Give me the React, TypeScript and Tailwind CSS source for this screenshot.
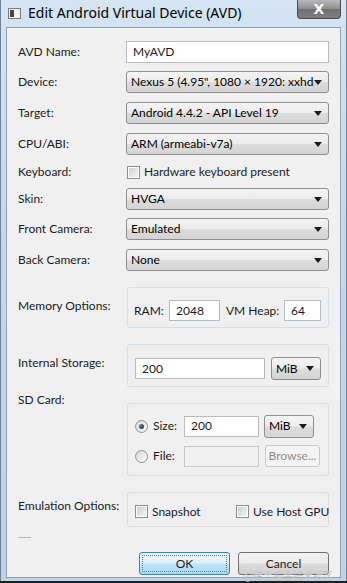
import type { ReactNode } from "react";

const FONT = { fontFamily: 'Lato, "Noto Sans", sans-serif' };

function Arrow() {
  return (
    <svg width="8" height="5" viewBox="0 0 8 5" className="shrink-0">
      <path d="M0 0 L8 0 L4 5 Z" fill="#1a1a1a" />
    </svg>
  );
}

function Select({ value, className = "" }: { value: string; className?: string }) {
  return (
    <div
      className={`flex min-w-0 items-center rounded-[3px] border border-[#8f8f8f] bg-[linear-gradient(#f4f4f4_0%,#ececec_48%,#dddddd_52%,#d4d4d4_100%)] pl-[4px] pr-[6px] ${className}`}
    >
      <span className="min-w-0 flex-1 overflow-hidden whitespace-nowrap text-black">{value}</span>
      <Arrow />
    </div>
  );
}

function Input({ value = "", className = "", disabled = false }: { value?: string; className?: string; disabled?: boolean }) {
  return (
    <div
      className={`flex items-center border pl-[6px] ${
        disabled ? "border-[#c8c8c8] bg-[#f0f0f0]" : "border-[#b6bcc4] bg-white"
      } ${className}`}
    >
      {value}
    </div>
  );
}

function Check({ label }: { label: string }) {
  return (
    <div className="flex items-center gap-[4px] whitespace-nowrap">
      <div className="flex h-[13px] w-[13px] shrink-0 items-center justify-center border border-[#8e8f8f] bg-white">
        <div className="h-[9px] w-[9px] bg-[linear-gradient(135deg,#cbcfd5,#f4f5f6)]" />
      </div>
      <span>{label}</span>
    </div>
  );
}

function Radio({ checked, label }: { checked: boolean; label: string }) {
  return (
    <div className="flex w-[49px] shrink-0 items-center gap-[5px]">
      <div className="flex h-[13px] w-[13px] items-center justify-center rounded-full border border-[#8e8f8f] bg-[linear-gradient(135deg,#d4d7db,#fbfbfb)]">
        {checked && <div className="h-[5px] w-[5px] rounded-full bg-[radial-gradient(circle_at_35%_35%,#6f7a84,#1d2329)]" />}
      </div>
      <span>{label}</span>
    </div>
  );
}

function Row({ label, children, className = "" }: { label: string; children: ReactNode; className?: string }) {
  return (
    <div className={`flex items-center ${className}`}>
      <div className="w-[108px] shrink-0 whitespace-nowrap">{label}</div>
      <div className="flex min-w-0 flex-1 flex-col">{children}</div>
    </div>
  );
}

function Group({ children, className = "" }: { children: ReactNode; className?: string }) {
  return (
    <div className={`ml-[1px] min-w-0 rounded-[3px] border border-[#d5dfe5] ${className}`}>{children}</div>
  );
}

export default function App() {
  return (
    <div
      className="relative h-[583px] w-[347px] overflow-hidden bg-[#1e1e1e] text-[12px] leading-[18px] text-[#1b1b1b]"
      style={FONT}
    >
      <div className="flex h-[581px] flex-col border-x border-[#6f8296] bg-[linear-gradient(180deg,#d5e4f2_0%,#c4d7ea_40%,#bed3e7_100%)]">
        {/* title bar */}
        <div className="flex h-[27px] shrink-0 items-start">
          <div className="ml-[7px] mt-[8px] flex h-[11px] w-[13px] items-center border border-[#7b7b7b] bg-[#f2f2f2]">
            <div className="ml-[1px] h-[7px] w-[4px] bg-[#444]" />
          </div>
          <div
            className="ml-[7px] mt-[4px] text-[14px] leading-[18px] text-black"
            style={{ fontFamily: '"Noto Sans", sans-serif' }}
          >
            Edit Android Virtual Device (AVD)
          </div>
          <div className="ml-auto mr-[5px] flex h-[19px] w-[44px] items-center justify-center rounded-b-[4px] border border-t-0 border-[#4a4a4a] bg-[linear-gradient(#b8b8b8,#8e8e8e_50%,#6f6f6f_51%,#7e7e7e)]">
            <span className="text-[14px] font-bold leading-none text-white" style={{ fontFamily: '"DejaVu Sans", sans-serif' }}>
              X
            </span>
          </div>
        </div>

        {/* client area */}
        <div className="mx-[5px] flex-1 border border-[#8da2b6] bg-[#f0f0f0] pl-[11px] pr-[11px]">
          <Row label="AVD Name:" className="mt-[13px] h-[22px]">
            <Input value="MyAVD" className="h-[22px]" />
          </Row>
          <Row label="Device:" className="mt-[8px] h-[22px]">
            <Select value={"Nexus 5 (4.95\", 1080 \u00d7 1920: xxhdpi)"} className="h-[22px]" />
          </Row>
          <Row label="Target:" className="mt-[9px] h-[22px]">
            <Select value="Android 4.4.2 - API Level 19" className="h-[22px]" />
          </Row>
          <Row label="CPU/ABI:" className="mt-[9px] h-[22px]">
            <Select value="ARM (armeabi-v7a)" className="h-[22px]" />
          </Row>
          <Row label="Keyboard:" className="mt-[6px] h-[22px]">
            <div className="pl-[1px]">
              <Check label="Hardware keyboard present" />
            </div>
          </Row>
          <Row label="Skin:" className="mt-[5px] h-[22px]">
            <Select value="HVGA" className="h-[22px]" />
          </Row>
          <Row label="Front Camera:" className="mt-[8px] h-[22px]">
            <Select value="Emulated" className="h-[22px]" />
          </Row>
          <Row label="Back Camera:" className="mt-[9px] h-[22px]">
            <Select value="None" className="h-[22px]" />
          </Row>

          {/* memory */}
          <div className="mt-[16px] flex">
            <div className="w-[108px] shrink-0 whitespace-nowrap pt-[10px]">Memory Options:</div>
            <Group className="flex h-[41px] flex-1 items-end pb-[6px] pl-[6px] pr-[7px]">
              <div className="flex h-[21px] w-full items-center">
                <span className="w-[35px] shrink-0">RAM:</span>
                <Input value="2048" className="h-[21px] w-[51px] shrink-0" />
                <span className="ml-[6px] w-[58px] shrink-0 whitespace-nowrap">VM Heap:</span>
                <Input value="64" className="h-[21px] min-w-0 flex-1" />
              </div>
            </Group>
          </div>

          {/* internal storage */}
          <div className="mt-[16px] flex">
            <div className="w-[108px] shrink-0 whitespace-nowrap pt-[10px]">Internal Storage:</div>
            <Group className="flex h-[43px] flex-1 items-end pb-[6px] pl-[7px] pr-[7px]">
              <div className="flex h-[23px] w-full items-center">
                <Input value="200" className="h-[21px] min-w-0 flex-1" />
                <Select value="MiB" className="ml-[6px] h-[23px] w-[50px] shrink-0 border-[#6f6f6f]" />
              </div>
            </Group>
          </div>

          {/* sd card */}
          <div className="mt-[4px] flex">
            <div className="w-[108px] shrink-0">SD Card:</div>
          </div>
          <div className="flex">
            <div className="w-[108px] shrink-0" />
            <Group className="-mt-[6px] flex h-[73px] flex-1 flex-col justify-end pb-[8px] pl-[7px] pr-[8px]">
              <div className="flex h-[22px] items-center">
                <Radio checked label="Size:" />
                <Input value="200" className="h-[21px] w-[75px] shrink-0" />
                <Select value="MiB" className="ml-[5px] h-[23px] w-[50px] shrink-0 border-[#6f6f6f]" />
              </div>
              <div className="mt-[8px] flex h-[22px] items-center">
                <Radio checked={false} label="File:" />
                <Input disabled className="h-[21px] w-[75px] shrink-0" />
                <div className="ml-[6px] flex h-[22px] min-w-0 flex-1 items-center justify-center rounded-[3px] border border-[#c9c9c9] bg-[#f4f4f4] text-[#8d8d8d]">
                  Browse...
                </div>
              </div>
            </Group>
          </div>

          {/* emulation */}
          <div className="mt-[16px] flex">
            <div className="w-[108px] shrink-0 whitespace-nowrap pt-[5px]">Emulation Options:</div>
            <Group className="flex h-[35px] flex-1 items-center pl-[7px] pr-[8px] pt-[4px]">
              <div className="w-[101px] shrink-0">
                <Check label="Snapshot" />
              </div>
              <Check label="Use Host GPU" />
            </Group>
          </div>

          <div className="mt-[10px] h-px w-[13px] bg-[#b9b9b9]" />

          <div className="mt-[14px] flex justify-end gap-[8px]">
            <div className="flex h-[23px] w-[91px] items-center justify-center rounded-[3px] border border-[#3c7fb1] bg-[linear-gradient(#eaf6fd_0%,#d9f0fc_48%,#bee6fd_52%,#a7d9f5_100%)] p-[2px]">
              <div className="flex h-full w-full items-center justify-center border border-dotted border-[#5f7d95]">
                OK
              </div>
            </div>
            <div className="flex h-[23px] w-[91px] items-center justify-center rounded-[3px] border border-[#707070] bg-[linear-gradient(#f2f2f2_0%,#ebebeb_48%,#dddddd_52%,#cfcfcf_100%)]">
              Cancel
            </div>
          </div>
        </div>
        <div className="h-[3px] shrink-0" />
      </div>
      <div className="absolute bottom-[2px] right-[14px] text-[10px] leading-none text-[#c2c2c2]" style={{ fontFamily: '"Noto Sans CJK SC", sans-serif' }}>
        @稀土掘金技术社区
      </div>
    </div>
  );
}
